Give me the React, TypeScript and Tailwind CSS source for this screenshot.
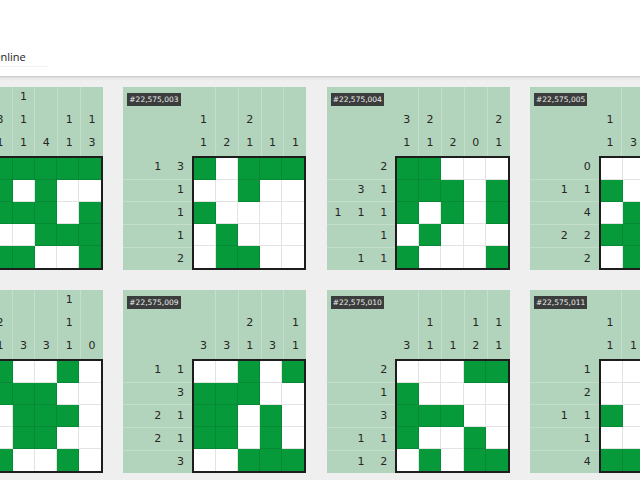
type Puzzle = {
  id: string;
  cells: string[];
};

// Top row and bottom row of the puzzle gallery
const PUZZLES: Puzzle[] = [
  { id: '#22,575,002', cells: ['#####', '#.#..', '###.#', '..###', '##..#'] },
  { id: '#22,575,003', cells: ['#.###', '..#..', '#....', '.#...', '.##..'] },
  { id: '#22,575,004', cells: ['##...', '###.#', '#.#.#', '.#...', '#...#'] },
  { id: '#22,575,005', cells: ['.....', '#...#', '.####', '##.##', '.##..'] },
  { id: '#22,575,008', cells: ['#..#.', '###..', '.###.', '.##..', '#..#.'] },
  { id: '#22,575,009', cells: ['..#.#', '###..', '##.#.', '##.#.', '..###'] },
  { id: '#22,575,010', cells: ['...##', '#....', '###..', '#..#.', '.#.##'] },
  { id: '#22,575,011', cells: ['..#..', '...##', '#..#.', '..#..', '####.'] },
];

function runs(line: boolean[]): number[] {
  const out: number[] = [];
  let n = 0;
  for (const on of line) {
    if (on) n++;
    else if (n) {
      out.push(n);
      n = 0;
    }
  }
  if (n) out.push(n);
  return out.length ? out : [0];
}

// left-pad a clue list to three slots
function pad(clue: number[]): (number | null)[] {
  return [...Array(3 - clue.length).fill(null), ...clue];
}

function PuzzleCard({ puzzle }: { puzzle: Puzzle }) {
  const grid = puzzle.cells.map((row) => row.split('').map((c) => c === '#'));
  const rowClues = grid.map((row) => runs(row));
  const colClues = [0, 1, 2, 3, 4].map((c) => runs(grid.map((row) => row[c])));

  return (
    <div className="grid h-[183px] w-[183px] grid-cols-8 grid-rows-8 bg-[#b3d4bc] text-[11px] text-[#262626]">
      <div className="col-span-3 row-span-3 pl-[4px] pt-[4px]">
        <span className="inline-block h-[13px] bg-[#3b3d3c] px-[2px] text-[7.5px] leading-[13px] text-[#ececec]">
          {puzzle.id}
        </span>
      </div>

      <div className="col-span-5 row-span-3 grid grid-cols-5">
        {colClues.map((clue, c) => (
          <div
            key={c}
            className={`grid grid-rows-3 ${c > 0 ? 'border-l border-[#c3dfcb]' : ''}`}
          >
            {pad(clue).map((v, i) => (
              <span key={i} className="flex items-center justify-center pb-[2px]">
                {v ?? ''}
              </span>
            ))}
          </div>
        ))}
      </div>

      <div className="col-span-3 row-span-5 grid grid-rows-5">
        {rowClues.map((clue, r) => (
          <div
            key={r}
            className={`grid grid-cols-3 ${r > 0 ? 'border-t border-[#c3dfcb]' : ''}`}
          >
            {pad(clue).map((v, i) => (
              <span key={i} className="flex items-center justify-center">
                {v ?? ''}
              </span>
            ))}
          </div>
        ))}
      </div>

      <div className="col-span-5 row-span-5 grid grid-cols-5 grid-rows-5 border-2 border-[#1d1d1d] bg-white">
        {grid.flatMap((row, r) =>
          row.map((on, c) => (
            <div
              key={`${r}-${c}`}
              className={`${on ? 'bg-[#079a3b]' : 'bg-white'} ${
                c < 4 ? 'border-r' : ''
              } ${r < 4 ? 'border-b' : ''} border-[rgba(0,0,0,0.11)]`}
            />
          ))
        )}
      </div>
    </div>
  );
}

export default function App() {
  return (
    <div className="h-[480px] w-[640px] overflow-hidden bg-[#efefef] font-['DejaVu_Sans',sans-serif]">
      <header className="h-[77px] border-b border-[#cccccc] bg-white pt-[50px] shadow-[0_1px_3px_rgba(0,0,0,0.10)]">
        <div className="w-[48px] overflow-hidden border-b border-[#f2f2f2] pb-[2px]">
          <span className="ml-[-8px] block text-[11px] leading-[14px] text-[#222] font-['Open_Sans',sans-serif]">
            Online
          </span>
        </div>
      </header>

      <main className="ml-[-80px] mt-[10px] grid w-[800px] grid-cols-[repeat(4,183px)] gap-x-[20.33px] gap-y-[20px]">
        {PUZZLES.map((p) => (
          <PuzzleCard key={p.id} puzzle={p} />
        ))}
      </main>
    </div>
  );
}
